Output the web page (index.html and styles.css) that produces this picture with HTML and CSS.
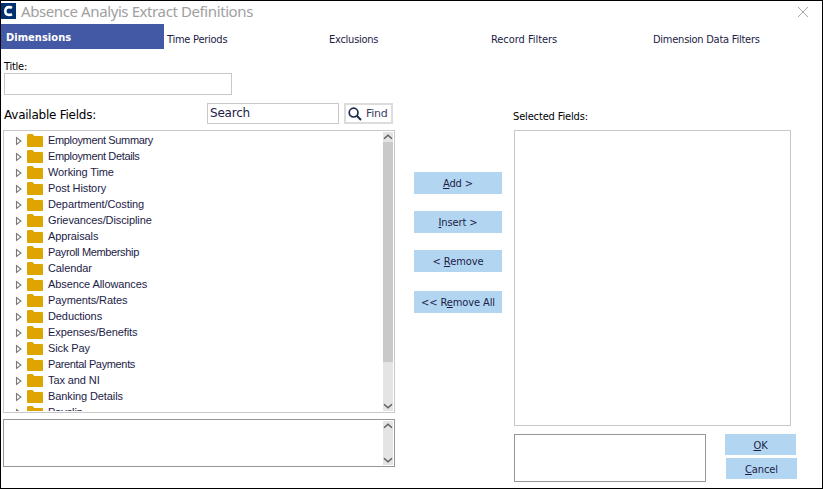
FILE: index.html
```html
<!DOCTYPE html>
<html lang="en">
<head>
    <meta charset="UTF-8">
    <meta name="viewport" content="width=device-width, initial-scale=1.0">
    <title>Absence Analyis Extract Definitions</title>
    <link rel="stylesheet" href="styles.css">
</head>
<body>
    <!-- shared icons -->
    <svg class="icon-defs" width="0" height="0">
        <symbol id="icon-arrow" viewBox="0 0 8 10">
            <path d="M1.5 1.5V8.5L6 5Z" fill="none" stroke="#777" stroke-width="1.1"/>
        </symbol>
        <symbol id="icon-folder" viewBox="0 0 16 13">
            <path d="M0 1.5Q0 0 1.2 0H5.5L7.3 2H15Q16 2 16 3V12Q16 13 15 13H1Q0 13 0 12Z" fill="#dea500"/>
        </symbol>
        <symbol id="icon-up" viewBox="0 0 10 10">
            <path d="M1 6.8L5 3.2L9 6.8" fill="none" stroke="#606060" stroke-width="1.5"/>
        </symbol>
        <symbol id="icon-down" viewBox="0 0 10 10">
            <path d="M1 3.2L5 6.8L9 3.2" fill="none" stroke="#606060" stroke-width="1.5"/>
        </symbol>
    </svg>

    <div class="window">
        <div class="title-bar">
            <svg class="app-icon" width="15" height="16" viewBox="0 0 15 16">
                <rect width="15" height="16" fill="#003070"/>
                <path d="M11 4.9Q9.8 4.1 8 4.1Q4.3 4.1 4.3 8Q4.3 11.9 8 11.9Q9.8 11.9 11 11.1" fill="none" stroke="#fff" stroke-width="2.6"/>
            </svg>
            <span class="window-title">Absence Analyis Extract Definitions</span>
            <svg class="close-icon" width="12" height="12" viewBox="0 0 12 12">
                <path d="M1 1L11 11M11 1L1 11" stroke="#a6a6a6" stroke-width="1"/>
            </svg>
        </div>

        <div class="tabs">
            <div class="tab active"><span>Dimensions</span></div>
            <div class="tab"><span>Time Periods</span></div>
            <div class="tab"><span>Exclusions</span></div>
            <div class="tab tab-records"><span>Record Filters</span></div>
            <div class="tab"><span>Dimension Data Filters</span></div>
        </div>

        <div class="content">
            <div class="left-column">
                <div class="title-label"><span>Title:</span></div>
                <div class="title-input"></div>
                <div class="search-row">
                    <span class="available-label">Available Fields:</span>
                    <div class="search-input"><span>Search</span></div>
                    <div class="find-btn">
                        <svg width="14" height="14" viewBox="0 0 14 14">
                            <circle cx="5.6" cy="5.6" r="4.4" fill="none" stroke="#1c2b4a" stroke-width="1.7"/>
                            <path d="M8.8 8.8L13 13" stroke="#1c2b4a" stroke-width="2"/>
                        </svg>
                        <span>Find</span>
                    </div>
                </div>
                <div class="tree-box">
                    <ul class="tree">
                        <li class="tight"><svg class="arrow"><use href="#icon-arrow"/></svg><svg class="folder"><use href="#icon-folder"/></svg><span>Employment Summary</span></li>
                        <li class="tight"><svg class="arrow"><use href="#icon-arrow"/></svg><svg class="folder"><use href="#icon-folder"/></svg><span>Employment Details</span></li>
                        <li><svg class="arrow"><use href="#icon-arrow"/></svg><svg class="folder"><use href="#icon-folder"/></svg><span>Working Time</span></li>
                        <li><svg class="arrow"><use href="#icon-arrow"/></svg><svg class="folder"><use href="#icon-folder"/></svg><span>Post History</span></li>
                        <li><svg class="arrow"><use href="#icon-arrow"/></svg><svg class="folder"><use href="#icon-folder"/></svg><span>Department/Costing</span></li>
                        <li><svg class="arrow"><use href="#icon-arrow"/></svg><svg class="folder"><use href="#icon-folder"/></svg><span>Grievances/Discipline</span></li>
                        <li><svg class="arrow"><use href="#icon-arrow"/></svg><svg class="folder"><use href="#icon-folder"/></svg><span>Appraisals</span></li>
                        <li class="tight"><svg class="arrow"><use href="#icon-arrow"/></svg><svg class="folder"><use href="#icon-folder"/></svg><span>Payroll Membership</span></li>
                        <li><svg class="arrow"><use href="#icon-arrow"/></svg><svg class="folder"><use href="#icon-folder"/></svg><span>Calendar</span></li>
                        <li><svg class="arrow"><use href="#icon-arrow"/></svg><svg class="folder"><use href="#icon-folder"/></svg><span>Absence Allowances</span></li>
                        <li><svg class="arrow"><use href="#icon-arrow"/></svg><svg class="folder"><use href="#icon-folder"/></svg><span>Payments/Rates</span></li>
                        <li><svg class="arrow"><use href="#icon-arrow"/></svg><svg class="folder"><use href="#icon-folder"/></svg><span>Deductions</span></li>
                        <li><svg class="arrow"><use href="#icon-arrow"/></svg><svg class="folder"><use href="#icon-folder"/></svg><span>Expenses/Benefits</span></li>
                        <li><svg class="arrow"><use href="#icon-arrow"/></svg><svg class="folder"><use href="#icon-folder"/></svg><span>Sick Pay</span></li>
                        <li class="tight"><svg class="arrow"><use href="#icon-arrow"/></svg><svg class="folder"><use href="#icon-folder"/></svg><span>Parental Payments</span></li>
                        <li><svg class="arrow"><use href="#icon-arrow"/></svg><svg class="folder"><use href="#icon-folder"/></svg><span>Tax and NI</span></li>
                        <li><svg class="arrow"><use href="#icon-arrow"/></svg><svg class="folder"><use href="#icon-folder"/></svg><span>Banking Details</span></li>
                        <li><svg class="arrow"><use href="#icon-arrow"/></svg><svg class="folder"><use href="#icon-folder"/></svg><span>Payslip</span></li>
                    </ul>
                    <div class="scrollbar">
                        <svg><use href="#icon-up"/></svg>
                        <div class="thumb"></div>
                        <svg><use href="#icon-down"/></svg>
                    </div>
                </div>
                <div class="description-box">
                    <div class="scrollbar">
                        <svg><use href="#icon-up"/></svg>
                        <svg><use href="#icon-down"/></svg>
                    </div>
                </div>
            </div>

            <div class="move-buttons">
                <div class="btn"><span><u>A</u>dd &gt;</span></div>
                <div class="btn"><span><u>I</u>nsert &gt;</span></div>
                <div class="btn"><span>&lt; <u>R</u>emove</span></div>
                <div class="btn btn-all"><span>&lt;&lt; R<u>e</u>move All</span></div>
            </div>

            <div class="right-column">
                <div class="selected-label"><span>Selected Fields:</span></div>
                <div class="selected-box"></div>
                <div class="footer-row">
                    <div class="selected-description"></div>
                    <div class="dialog-buttons">
                        <div class="btn btn-ok"><span><u>O</u>K</span></div>
                        <div class="btn btn-cancel"><span><u>C</u>ancel</span></div>
                    </div>
                </div>
            </div>
        </div>
    </div>
</body>
</html>
```

FILE: styles.css
```css
:root {
    --primary-color: #4459a5;
    --button-color: #b2d6f2;
    --text-color: #1c1c46;
    --border-color: #c8c8c8;
    --border-dark: #969696;
}

* {
    box-sizing: border-box;
}

body {
    margin: 0;
    background-color: #fff;
    color: var(--text-color);
    font-family: "DejaVu Sans Condensed", "DejaVu Sans", sans-serif;
    font-stretch: condensed;
    font-size: 11px;
    line-height: 14px;
    letter-spacing: -0.25px;
    overflow: hidden;
}

span {
    white-space: nowrap;
}

.icon-defs {
    display: none;
}

.window {
    width: 823px;
    height: 489px;
    border: 1px solid #000;
    overflow: hidden;
}

/* Title bar */
.title-bar {
    height: 23px;
    display: flex;
    align-items: flex-start;
    padding: 2px 13px 0 0;
}

.window-title {
    margin-left: 5px;
    font-family: "Noto Sans", "Open Sans", sans-serif;
    font-stretch: normal;
    font-size: 15px;
    line-height: 17px;
    letter-spacing: -0.4px;
    color: #a0a0a0;
}

.close-icon {
    margin-left: auto;
    margin-top: 3px;
}

/* Tabs */
.tabs {
    display: grid;
    grid-template-columns: 163px repeat(4, 162px);
    height: 25px;
}

.tab {
    padding: 9px 0 0 3px;
}

.tab.active {
    background-color: var(--primary-color);
    color: #fff;
    font-weight: bold;
    letter-spacing: 0.05px;
    padding: 7px 0 0 5px;
}

.tab-records {
    letter-spacing: -0.05px;
}

/* Columns */
.content {
    display: flex;
    align-items: flex-start;
}

.left-column {
    width: 392px;
    margin-left: 2px;
}

.title-label {
    padding: 11px 0 0 1px;
    height: 24px;
    color: #000;
}

.title-input {
    width: 228px;
    height: 22px;
    margin-left: 1px;
    border: 1px solid var(--border-color);
}

.search-row {
    display: flex;
    margin-top: 8px;
    height: 27px;
    padding-left: 1px;
    font-family: "DejaVu Sans", sans-serif;
    font-stretch: normal;
}

.available-label {
    width: 203px;
    padding-top: 5px;
    color: #000;
    font-size: 12px;
    letter-spacing: -0.24px;
}

.search-input {
    width: 132px;
    height: 21px;
    border: 1px solid var(--border-color);
    padding: 2px;
    font-size: 12px;
    letter-spacing: -0.2px;
}

.find-btn {
    display: flex;
    width: 49px;
    height: 21px;
    margin-left: 5px;
    border: 2px solid #dcdcdc;
    padding: 2px 0 0 2px;
}

.find-btn span {
    margin-left: 4px;
    color: #3c3c64;
}

/* Tree */
.tree-box {
    display: flex;
    height: 283px;
    border: 1px solid var(--border-color);
    padding: 1px;
    overflow: hidden;
}

.tree {
    flex: 1;
    height: 279px;
    margin: 0;
    padding: 0;
    list-style: none;
    overflow: hidden;
    font-family: "Liberation Sans", Arial, sans-serif;
    font-stretch: normal;
    font-size: 11px;
    line-height: 17px;
    letter-spacing: -0.1px;
}

.tree li {
    display: flex;
    height: 16px;
    padding-left: 10px;
}

.tree .tight {
    letter-spacing: -0.35px;
}

.arrow {
    width: 8px;
    height: 10px;
    margin-top: 4px;
}

.folder {
    width: 16px;
    height: 13px;
    margin: 2px 5px 0 4px;
}

.scrollbar {
    display: flex;
    flex-direction: column;
    justify-content: space-between;
    width: 10px;
    background-color: #e4e4e4;
}

.scrollbar svg {
    width: 10px;
    height: 10px;
}

.thumb {
    height: 220px;
    margin-bottom: auto;
    background-color: #c9c9c9;
}

.description-box {
    display: flex;
    justify-content: flex-end;
    height: 48px;
    margin-top: 6px;
    border: 1px solid var(--border-dark);
    padding: 1px;
}

/* Buttons */
.btn {
    display: flex;
    justify-content: center;
    align-items: center;
    height: 22px;
    padding-top: 2px;
    letter-spacing: -0.1px;
    background-color: var(--button-color);
}

.btn u {
    text-underline-offset: 1px;
}

.move-buttons {
    display: flex;
    flex-direction: column;
    gap: 17px;
    width: 88px;
    margin: 123px 0 0 19px;
}

.btn-all {
    margin-top: 2px;
}

.right-column {
    width: 284px;
    margin-left: 11px;
}

.selected-label {
    height: 81px;
    padding-top: 61px;
    color: #000;
    letter-spacing: -0.15px;
}

.selected-box {
    width: 277px;
    height: 296px;
    margin-left: 1px;
    border: 1px solid var(--border-color);
}

.footer-row {
    display: flex;
    margin-top: 8px;
}

.selected-description {
    width: 192px;
    height: 48px;
    margin-left: 1px;
    border: 1px solid var(--border-dark);
}

.dialog-buttons {
    margin-left: 19px;
}

.dialog-buttons .btn {
    width: 71px;
    height: 21px;
}

.btn-cancel {
    margin: 3px 0 0 1px;
}
```
